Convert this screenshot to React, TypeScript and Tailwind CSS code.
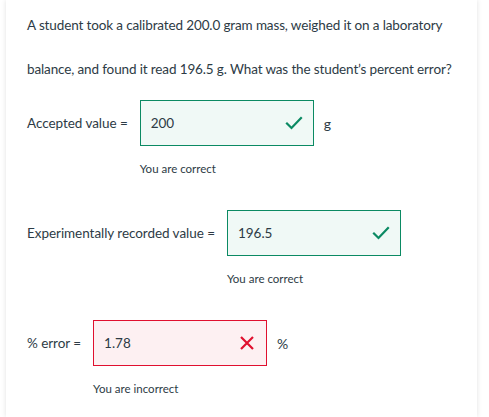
import React from "react";

function Check() {
  return (
    <svg width="18" height="14" viewBox="0 0 18 14" fill="none" className="shrink-0">
      <path d="M2 7.5 L6.5 12 L16 2" stroke="#0b8a63" strokeWidth="2.2" strokeLinecap="square" />
    </svg>
  );
}

function Cross() {
  return (
    <svg width="16" height="16" viewBox="0 0 16 16" fill="none" className="shrink-0">
      <path d="M2 2 L14 14 M14 2 L2 14" stroke="#e0102f" strokeWidth="2.2" />
    </svg>
  );
}

function Row({
  label,
  value,
  unit,
  ok,
  mt,
}: {
  label: string;
  value: string;
  unit?: string;
  ok: boolean;
  mt: string;
}) {
  return (
    <div className={mt}>
      <div className="flex items-center">
        <span className="text-[13.5px] tracking-[-0.05px] mr-[12px] whitespace-nowrap">{label}</span>
        <div className="flex flex-col relative">
          <div
            className={
              ok
                ? "w-[174px] h-[46px] border border-[#0b8a63] bg-[#f0f9f6] flex items-center justify-between pl-[10px] pr-[10px]"
                : "w-[174px] h-[46px] border border-[#e0102f] bg-[#fdf0f2] flex items-center justify-between pl-[10px] pr-[11px]"
            }
          >
            <span className="text-[13.5px]">{value}</span>
            {ok ? <Check /> : <Cross />}
          </div>
          <div className="absolute top-[61px] left-0 text-[11.5px] leading-[16px] whitespace-nowrap">
            {ok ? "You are correct" : "You are incorrect"}
          </div>
        </div>
        {unit && <span className="text-[14px] ml-[10px]">{unit}</span>}
      </div>
    </div>
  );
}

export default function App() {
  return (
    <div
      className="w-[489px] h-[417px] bg-white overflow-hidden text-[#2d3b45]"
      style={{ fontFamily: "Lato, 'Noto Sans', sans-serif" }}
    >
      <div className="ml-[6px] w-[471px] h-[417px] bg-white shadow-[0_0_5px_rgba(0,0,0,0.12)] px-[21px] pt-[3px]">
        <p className="text-[13.5px] tracking-[-0.13px] leading-[44px] whitespace-nowrap">
          A student took a calibrated 200.0 gram mass, weighed it on a laboratory
          <br />
          balance, and found it read 196.5 g. What was the student’s percent error?
        </p>
        <Row mt="mt-[9px]" label="Accepted value =" value="200" unit="g" ok />
        <Row mt="mt-[64px]" label="Experimentally recorded value =" value="196.5" ok />
        <Row mt="mt-[64px]" label="% error =" value="1.78" unit="%" ok={false} />
      </div>
    </div>
  );
}
